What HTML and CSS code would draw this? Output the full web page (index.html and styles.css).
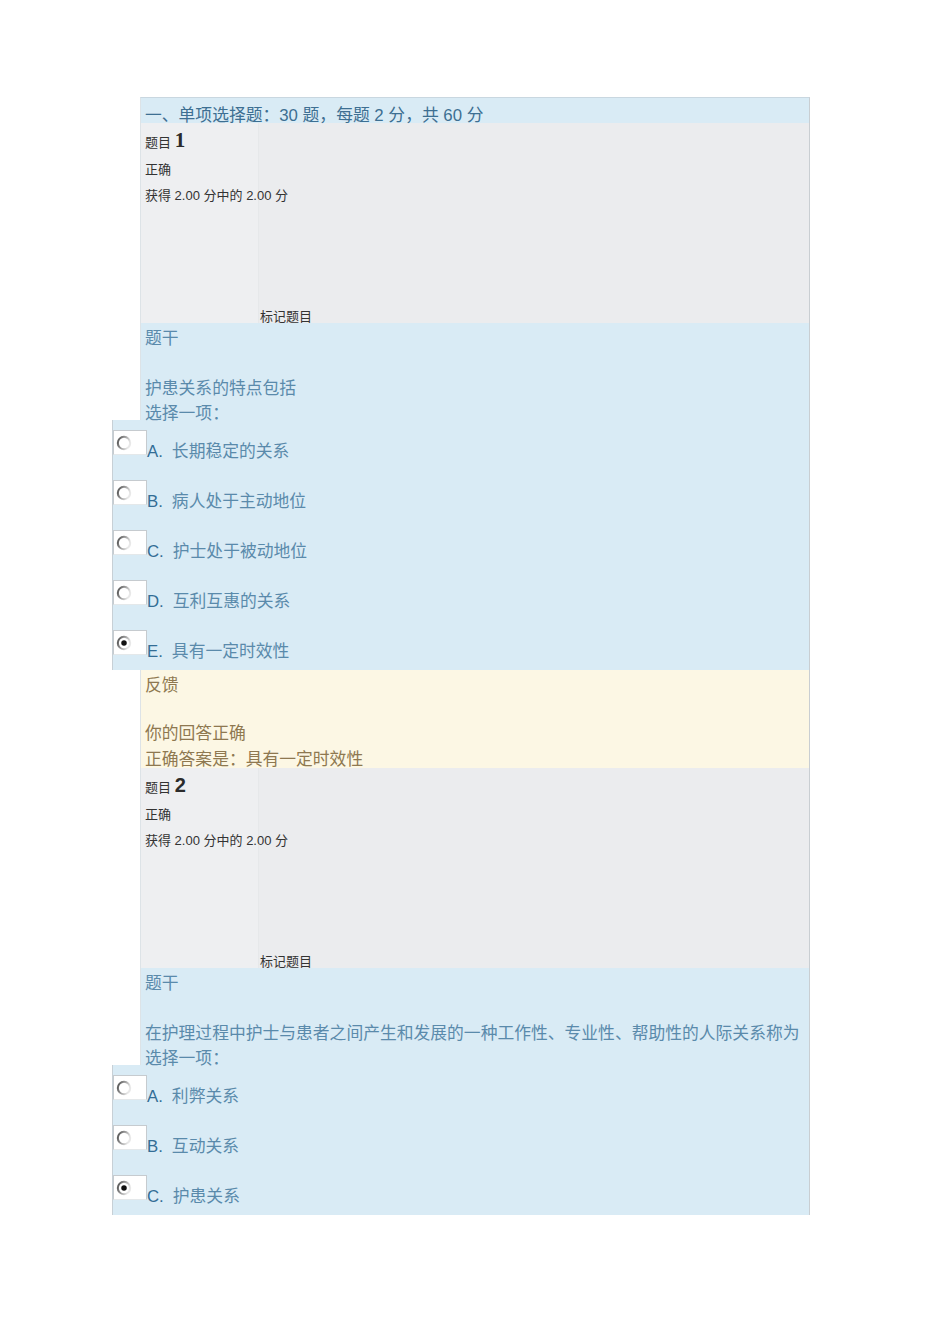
FILE: index.html
```html
<!DOCTYPE html>
<html lang="zh-CN">
<head>
<meta charset="utf-8">
<title>单项选择题</title>
<link rel="stylesheet" href="styles.css">
</head>
<body>
<svg width="0" height="0" class="defs" aria-hidden="true">
  <defs>
    <linearGradient id="rg" x1="0" y1="0" x2="1" y2="0.4">
      <stop offset="0" stop-color="#4a4a4a"/>
      <stop offset="0.5" stop-color="#9a9a9a"/>
      <stop offset="1" stop-color="#e8e8e8"/>
    </linearGradient>
  </defs>
</svg>
<div class="page">
  <div class="quiz">
    <div class="section-head">一、单项选择题：30 题，每题 2 分，共 60 分</div>

    <div class="info">
      <div class="info-left">
        <div class="qno">题目 <span class="num serif">1</span></div>
        <div class="info-line">正确</div>
        <div class="info-line">获得 2.00 分中的 2.00 分</div>
      </div>
      <div class="info-right"><span class="flag">标记题目</span></div>
    </div>

    <div class="content">
      <div class="stem-title">题干</div>
      <div class="qtext">护患关系的特点包括</div>
      <div class="qtext">选择一项：</div>
      <div class="answers">
        <div class="opt"><span class="rbox"><svg class="radio" viewBox="0 0 14 14"><circle cx="7" cy="7" r="5.4" fill="#fff" stroke="url(#rg)" stroke-width="1.8"/></svg></span><span class="label"><span class="letter">A.</span><span class="atext">长期稳定的关系</span></span></div>
        <div class="opt"><span class="rbox"><svg class="radio" viewBox="0 0 14 14"><circle cx="7" cy="7" r="5.4" fill="#fff" stroke="url(#rg)" stroke-width="1.8"/></svg></span><span class="label"><span class="letter">B.</span><span class="atext">病人处于主动地位</span></span></div>
        <div class="opt"><span class="rbox"><svg class="radio" viewBox="0 0 14 14"><circle cx="7" cy="7" r="5.4" fill="#fff" stroke="url(#rg)" stroke-width="1.8"/></svg></span><span class="label"><span class="letter">C.</span><span class="atext">护士处于被动地位</span></span></div>
        <div class="opt"><span class="rbox"><svg class="radio" viewBox="0 0 14 14"><circle cx="7" cy="7" r="5.4" fill="#fff" stroke="url(#rg)" stroke-width="1.8"/></svg></span><span class="label"><span class="letter">D.</span><span class="atext">互利互惠的关系</span></span></div>
        <div class="opt"><span class="rbox"><svg class="radio" viewBox="0 0 14 14"><circle cx="7" cy="7" r="5.4" fill="#fff" stroke="url(#rg)" stroke-width="1.8"/><circle cx="7" cy="7" r="2.4" fill="#111"/></svg></span><span class="label"><span class="letter">E.</span><span class="atext">具有一定时效性</span></span></div>
      </div>
    </div>

    <div class="feedback">
      <div class="fb-title">反馈</div>
      <div class="fb-line">你的回答正确</div>
      <div class="fb-line last">正确答案是：具有一定时效性</div>
    </div>

    <div class="info">
      <div class="info-left">
        <div class="qno">题目 <span class="num sans">2</span></div>
        <div class="info-line">正确</div>
        <div class="info-line">获得 2.00 分中的 2.00 分</div>
      </div>
      <div class="info-right"><span class="flag">标记题目</span></div>
    </div>

    <div class="content">
      <div class="stem-title">题干</div>
      <div class="qtext">在护理过程中护士与患者之间产生和发展的一种工作性、专业性、帮助性的人际关系称为</div>
      <div class="qtext">选择一项：</div>
      <div class="answers">
        <div class="opt"><span class="rbox"><svg class="radio" viewBox="0 0 14 14"><circle cx="7" cy="7" r="5.4" fill="#fff" stroke="url(#rg)" stroke-width="1.8"/></svg></span><span class="label"><span class="letter">A.</span><span class="atext">利弊关系</span></span></div>
        <div class="opt"><span class="rbox"><svg class="radio" viewBox="0 0 14 14"><circle cx="7" cy="7" r="5.4" fill="#fff" stroke="url(#rg)" stroke-width="1.8"/></svg></span><span class="label"><span class="letter">B.</span><span class="atext">互动关系</span></span></div>
        <div class="opt"><span class="rbox"><svg class="radio" viewBox="0 0 14 14"><circle cx="7" cy="7" r="5.4" fill="#fff" stroke="url(#rg)" stroke-width="1.8"/><circle cx="7" cy="7" r="2.4" fill="#111"/></svg></span><span class="label"><span class="letter">C.</span><span class="atext">护患关系</span></span></div>
      </div>
    </div>
  </div>
</div>
</body>
</html>
```

FILE: styles.css
```css
html, body {
  margin: 0;
  padding: 0;
  background: #ffffff;
}

body {
  font-family: "Liberation Sans", "Noto Sans CJK SC", sans-serif;
  font-size: 16.8px;
}

.defs {
  position: absolute;
  width: 0;
  height: 0;
}

.page {
  padding: 97px 0 130px 140px;
}

.quiz {
  width: 668px;
  border-top: 1px solid #c9d7e0;
  border-right: 1px solid #c9ced2;
  border-left: 1px solid #dde3e7;
}

.section-head {
  height: 25px;
  box-sizing: border-box;
  padding: 7px 4px 0;
  line-height: 22px;
  background: #d9ebf5;
  color: #3d6f92;
  white-space: nowrap;
}

.info {
  display: flex;
  height: 200px;
  background: #ebecee;
}

.info-left {
  width: 118px;
  flex: none;
  background: #eeeff1;
  border-right: 1px solid #e6e8ea;
  padding-left: 4px;
  box-sizing: border-box;
  white-space: nowrap;
  font-size: 13px;
  color: #333;
}

.qno {
  height: 33px;
  line-height: 28px;
  padding-top: 3px;
  box-sizing: border-box;
}

.num {
  font-weight: bold;
  font-size: 21px;
  color: #2b2b2b;
}

.num.serif {
  font-family: "Liberation Serif", serif;
}

.num.sans {
  font-family: "Liberation Sans", sans-serif;
  font-size: 20px;
}

.info-line {
  line-height: 25.5px;
  position: relative;
  z-index: 1;
}

.info-line:nth-child(2) {
  padding-top: 1px;
}

.info-right {
  flex: 1;
  display: flex;
  align-items: flex-end;
  font-size: 13px;
  color: #333;
}

.flag {
  line-height: 13px;
  padding-left: 1px;
}

.content {
  background: #d9ebf5;
  color: #5a8aab;
  padding-top: 3px;
}

.stem-title {
  padding-left: 4px;
  line-height: 26px;
  margin-bottom: 24px;
}

.qtext {
  padding-left: 4px;
  line-height: 25px;
  white-space: nowrap;
}

.answers {
  margin-left: -29px;
  margin-top: -6px;
  border-left: 1px solid #c7d0d6;
  background: #d9ebf5;
}

.opt {
  height: 50px;
  box-sizing: border-box;
  padding-top: 10px;
  display: flex;
  align-items: flex-start;
}

.rbox {
  display: block;
  width: 34px;
  height: 25px;
  box-sizing: border-box;
  background: #ffffff;
  border: 1px solid #c6cbcf;
  border-bottom-color: #e4e8ea;
  position: relative;
  flex: none;
}

.radio {
  position: absolute;
  left: 2px;
  top: 4px;
  width: 16px;
  height: 16px;
}

.label {
  display: block;
  line-height: 20px;
  padding-top: 12px;
  white-space: nowrap;
}

.letter {
  color: #336d95;
  margin-right: 9px;
}

.atext {
  color: #5a8aab;
}

.feedback {
  background: #fcf7e4;
  color: #8e7850;
  padding: 3px 4px 0;
  height: 98px;
  box-sizing: border-box;
  overflow: hidden;
}

.fb-title {
  line-height: 26px;
  margin-bottom: 22px;
}

.fb-line {
  line-height: 26px;
}

.fb-line.last {
  line-height: 25px;
}
```
